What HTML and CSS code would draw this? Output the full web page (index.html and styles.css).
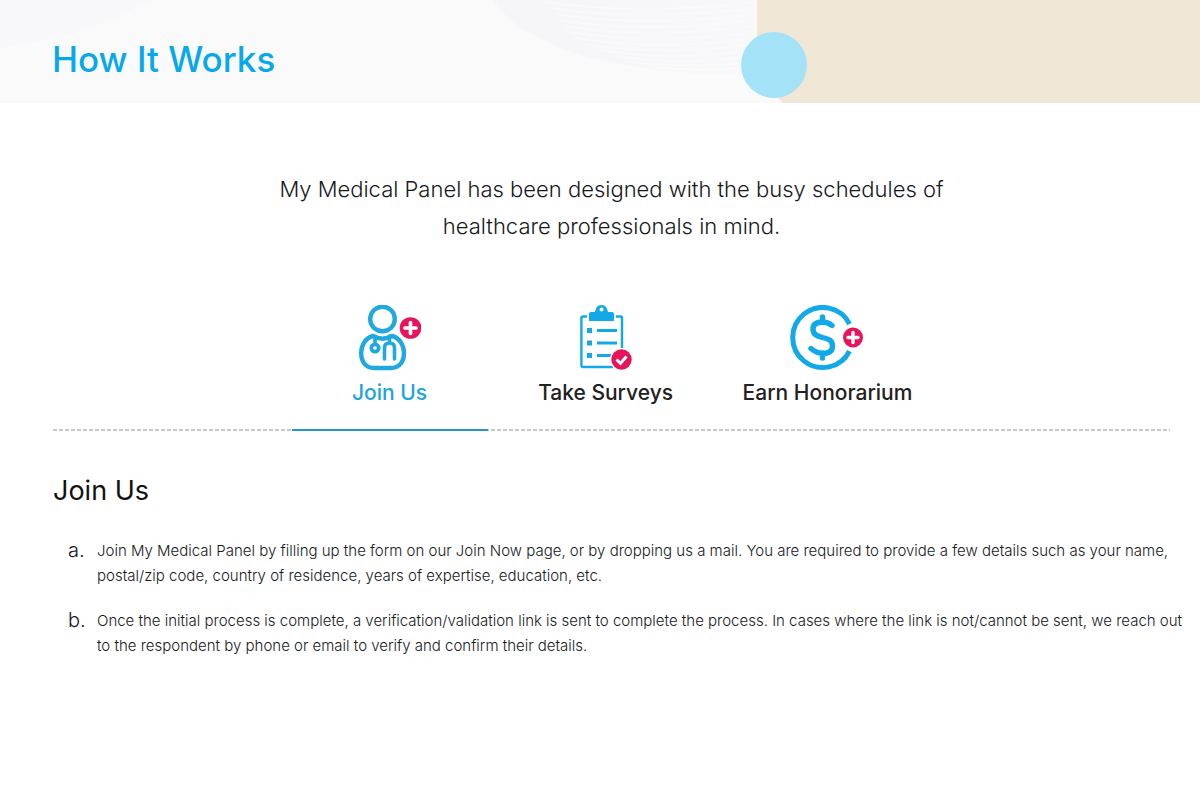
FILE: index.html
```html
<!DOCTYPE html>
<html lang="en">
<head>
<meta charset="utf-8">
<title>How It Works</title>
<link rel="stylesheet" href="styles.css">
</head>
<body>
<header class="banner">
  <svg class="waves" viewBox="0 0 757 103" aria-hidden="true">
    <defs>
      <linearGradient id="fade" x1="0" x2="1"><stop offset="0.1" stop-color="#f6f6f9"/><stop offset="1" stop-color="#f8f8fa"/></linearGradient>
    </defs>
    <path d="M0 0H150C110 22 62 40 0 48Z" fill="#f8f8fa"/>
    <path d="M492 0C525 45 600 74 757 75V0Z" fill="url(#fade)"/>
    <path d="M545 2Q640 16 757 2M550 8Q640 22 757 8M555 14Q640 28 757 14M560 20Q640 34 757 20M565 26Q640 40 757 26M570 32Q650 46 757 32M575 38Q660 52 757 38M585 44Q660 57 757 44M600 50Q670 62 757 50M615 56Q680 66 757 56M630 62Q690 69 757 62M650 67Q700 72 757 67" fill="none" stroke="#fafafb" stroke-width="1.500"/>
  </svg>
  <h1 class="banner-title">How It Works</h1>
  <div class="banner-art">
    <svg class="banner-shape" viewBox="0 0 443 103" preserveAspectRatio="xMinYMin slice" aria-hidden="true"><path d="M0 0H2000V103H26Q0 78 0 50Z" fill="#f1e7d7"/></svg>
    <span class="dot"></span>
  </div>
</header>
<main class="content">
  <p class="intro">My Medical Panel has been designed with the busy schedules of<br>healthcare professionals in mind.</p>
  <div class="tabs" role="tablist">
    <button class="tab active" type="button" role="tab" aria-selected="true" aria-controls="panel" id="join">
      <svg class="icon" width="62" height="66" viewBox="0 0 62 66" aria-hidden="true">
        <g fill="none" stroke="#21a8df" stroke-width="4.400" stroke-linecap="round" stroke-linejoin="round">
          <circle cx="23.500" cy="14" r="12.300"/>
          <path d="M14 31C6 33 2.200 41 2.200 48C2.200 57 7 63 15 63H32C40 63 45 57 45 48C45 41 41 33 33 31C27 34.500 20 34.500 14 31Z"/>
          <circle cx="16" cy="43" r="3.700" stroke-width="3.800"/>
          <path d="M16 39V33M30.500 31V38M25.500 54V43Q25.500 38 30.500 38Q35.500 38 35.500 43V54" stroke-width="3.600"/>
        </g>
        <circle cx="51.500" cy="23" r="10.800" fill="#e6145c"/>
        <path d="M51.500 17.500V28.500M46 23H57" stroke="#fff" stroke-width="3.700" stroke-linecap="round"/>
      </svg>
      <span>Join Us</span>
    </button>
    <button class="tab" type="button" role="tab" aria-selected="false">
      <svg class="icon" width="52" height="66" viewBox="0 0 52 66" aria-hidden="true">
        <g fill="none" stroke="#12a9e8" stroke-width="2.400">
          <path d="M7 11.500H3Q1.400 11.500 1.400 13V60.500Q1.400 62 3 62H33M36 11.500H40.500Q42 11.500 42 13V46"/>
          <path d="M17 25.500H37M17 38H37M17 50.500H33" stroke-width="3.200"/>
          <path d="M7 25.500H12M7 38H12M7 50.500H12" stroke-width="5"/>
        </g>
        <path d="M9 16V9Q9 7 11 7H15C16 3 17 0 21.500 0S27 3 28 7H32Q34 7 34 9V16Z" fill="#12a9e8"/>
        <circle cx="21.500" cy="4.500" r="2" fill="#fff"/>
        <circle cx="41.500" cy="54.500" r="11.500" fill="#fff"/>
        <circle cx="41.500" cy="54.500" r="10.200" fill="#e6145c"/>
        <path d="M36.500 54.500L40.500 58.300L46.500 51.500" fill="none" stroke="#fff" stroke-width="3"/>
      </svg>
      <span>Take Surveys</span>
    </button>
    <button class="tab" type="button" role="tab" aria-selected="false">
      <svg class="icon" width="74" height="66" viewBox="0 0 74 66" aria-hidden="true">
        <g fill="none" stroke="#12a9e8">
          <path d="M59.500 19A30 30 0 1 0 59.500 46" stroke-width="5"/>
          <path d="M42 20.500C38.500 17.500 36 17 32 17Q23 17.500 23 24C23 30 27.500 31 32.500 32.500C38.500 34 42.500 35 42.500 41Q42.500 48 33.500 48.500C27.500 48.500 24.500 46.500 21 43.500M32.500 12V17M32.500 48V53" stroke-width="5.400" stroke-linecap="round" stroke-linejoin="round"/>
        </g>
        <circle cx="63" cy="32.500" r="10" fill="#e6145c"/>
        <path d="M63 27.500V37.500M58 32.500H68" stroke="#fff" stroke-width="3.400" stroke-linecap="round"/>
      </svg>
      <span>Earn Honorarium</span>
    </button>
  </div>
  <section class="panel" id="panel" role="tabpanel" aria-labelledby="join">
    <h2 class="panel-title">Join Us</h2>
    <ol class="steps">
      <li class="step"><p>Join My Medical Panel by filling up the form on our Join Now page, or by dropping us a mail. You are required to provide a few details such as your name,<br>postal/zip code, country of residence, years of expertise, education, etc.</p></li>
      <li class="step"><p>Once the initial process is complete, a verification/validation link is sent to complete the process. In cases where the link is not/cannot be sent, we reach out<br>to the respondent by phone or email to verify and confirm their details.</p></li>
    </ol>
  </section>
</main>
</body>
</html>
```
FILE: styles.css
```css
* { box-sizing: border-box; }
body {
  margin: 0;
  background: #fff;
  color: #15191c;
  font-family: Inter, "Open Sans", sans-serif;
}
h1, h2, p, ol { margin: 0; padding: 0; }
.banner {
  position: relative;
  display: flex;
  justify-content: space-between;
  background: #fafafa;
}
.waves {
  position: absolute;
  top: 0;
  left: 0;
  width: 63.1%;
}
.banner-title {
  position: relative;
  padding: 35px 0 20px 52px;
  color: #08a9ea;
  font-size: 35px;
  font-weight: 500;
  line-height: 48px;
}
.banner-art {
  position: relative;
  width: 36.9%;
}
.banner-shape {
  position: absolute;
  width: 100%;
  height: 100%;
}
.dot {
  position: absolute;
  top: 32px;
  left: -16px;
  width: 66px;
  height: 66px;
  border-radius: 50%;
  background: #a4e2f8;
}
.content { padding: 68px 30px 40px 53px; }
.intro {
  font-size: 22px;
  font-weight: 300;
  line-height: 37px;
  text-align: center;
}
.tabs {
  display: flex;
  justify-content: center;
  gap: 20px;
  margin-top: 60px;
  background: repeating-linear-gradient(to right, #c8c8c8 0 4px, transparent 4px 6px) left bottom / 100% 2px no-repeat;
}
.tab {
  display: flex;
  flex-direction: column;
  align-items: center;
  gap: 8px;
  min-width: 196px;
  padding: 0 19px 22px;
  border: 0;
  border-bottom: 2px solid transparent;
  background: none;
  color: #212121;
  font-family: inherit;
  font-size: 21px;
  font-weight: 500;
  line-height: 28px;
  white-space: nowrap;
}
.tab.active {
  border-bottom-color: #2797cb;
  color: #21a3dc;
}
.icon { display: block; }
.panel-title {
  margin-top: 40px;
  color: #111;
  font-size: 27px;
  font-weight: 400;
  line-height: 40px;
}
.steps {
  display: grid;
  gap: 20px;
  margin-top: 27px;
  list-style: none;
  counter-reset: step;
}
.step {
  display: grid;
  grid-template-columns: 29px 1fr;
  padding-left: 15px;
  counter-increment: step;
  font-size: 15px;
  font-weight: 300;
  line-height: 25px;
}
.step::before {
  content: counter(step, lower-alpha) ".";
  font-size: 20px;
}
@media (min-width: 1200px) {
  .step { white-space: nowrap; }
}
```
